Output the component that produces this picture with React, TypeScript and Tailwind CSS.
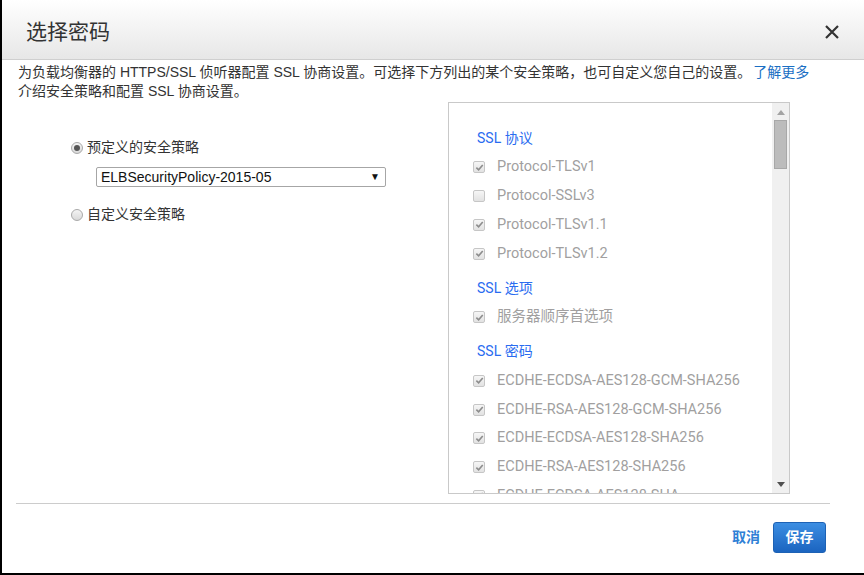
import React from "react";

const cjk = { fontFamily: '"Liberation Sans", "Noto Sans CJK SC", sans-serif' };
const roboto = { fontFamily: 'Roboto, "Noto Sans CJK SC", sans-serif' };

function Radio({ checked }: { checked?: boolean }) {
  return (
    <span className="flex h-[12px] w-[12px] items-center justify-center rounded-full border border-[#a9a9a9] bg-gradient-to-b from-[#f4f4f4] to-[#d9d9d9]">
      {checked && <span className="h-[6px] w-[6px] rounded-full bg-[#555]" />}
    </span>
  );
}

function Check({ checked }: { checked?: boolean }) {
  return (
    <span className="flex h-[12px] w-[12px] items-center justify-center rounded-[2px] border border-[#c6c6c6] bg-gradient-to-b from-[#f6f6f6] to-[#e2e2e2]">
      {checked && (
        <svg width="9" height="9" viewBox="0 0 10 10">
          <path d="M1.5 5.2 L4 7.6 L8.6 2.2" stroke="#8d8d8d" strokeWidth="1.8" fill="none" />
        </svg>
      )}
    </span>
  );
}

function Item({ label, checked = true }: { label: string; checked?: boolean }) {
  return (
    <div className="flex h-[28.8px] items-center">
      <Check checked={checked} />
      <span className="ml-[12px] text-[14.5px] text-[#a19f9f]" style={roboto}>
        {label}
      </span>
    </div>
  );
}

function Heading({ text, first }: { text: string; first?: boolean }) {
  return (
    <div
      className={`flex h-[28.8px] items-center pl-[4px] text-[14px] text-[#2a6cf0] ${first ? "" : "mt-[6px]"}`}
      style={roboto}
    >
      {text}
    </div>
  );
}

export default function App() {
  return (
    <div className="flex h-[575px] w-[864px] flex-col overflow-hidden border-b-2 border-l-2 border-black bg-white text-[#333]" style={cjk}>
      {/* header */}
      <div className="flex h-[60px] shrink-0 items-center justify-between border-b border-[#cfcfcf] bg-gradient-to-b from-white to-[#e7e7e7] pl-[24px] pr-[24px] pt-[4px]">
        <h1 className="text-[21px] font-normal text-[#333]">选择密码</h1>
        <svg width="16" height="16" viewBox="0 0 16 16">
          <path d="M2 2 L14 14 M14 2 L2 14" stroke="#333" strokeWidth="2.2" />
        </svg>
      </div>

      {/* description */}
      <p className="mt-[3px] px-[16px] text-[14px] leading-[19px] text-[#333]">
        为负载均衡器的 HTTPS/SSL 侦听器配置 SSL 协商设置。可选择下方列出的某个安全策略，也可自定义您自己的设置。
        <span className="ml-[2px] text-[#1a6fc4]">了解更多</span>
        <br />
        介绍安全策略和配置 SSL 协商设置。
      </p>

      {/* body */}
      <div className="flex pl-[14px]">
        <div className="w-[432px] pl-[55px] pt-[37px]">
          <label className="flex h-[19px] items-center gap-[4px] text-[14px]">
            <Radio checked />
            <span>预定义的安全策略</span>
          </label>
          <div className="ml-[25px] mt-[10px] flex h-[20px] w-[290px] items-center justify-between rounded-[2px] border border-[#a6a6a6] bg-white pl-[4px] pr-[5px] text-[14px] text-[#111]">
            <span className="leading-none">ELBSecurityPolicy-2015-05</span>
            <span className="text-[10px] leading-none">▼</span>
          </div>
          <label className="mt-[18px] flex h-[19px] items-center gap-[4px] text-[14px]">
            <Radio />
            <span>自定义安全策略</span>
          </label>
        </div>

        <div className="relative mt-[1px] flex h-[392px] w-[342px] overflow-hidden border border-[#c9c9c9]">
          <div className="flex-1 overflow-hidden pl-[24px] pt-[21px]">
            <Heading text="SSL 协议" first />
            <Item label="Protocol-TLSv1" />
            <Item label="Protocol-SSLv3" checked={false} />
            <Item label="Protocol-TLSv1.1" />
            <Item label="Protocol-TLSv1.2" />
            <Heading text="SSL 选项" />
            <Item label="服务器顺序首选项" />
            <Heading text="SSL 密码" />
            <Item label="ECDHE-ECDSA-AES128-GCM-SHA256" />
            <Item label="ECDHE-RSA-AES128-GCM-SHA256" />
            <Item label="ECDHE-ECDSA-AES128-SHA256" />
            <Item label="ECDHE-RSA-AES128-SHA256" />
            <Item label="ECDHE-ECDSA-AES128-SHA" />
          </div>
          {/* scrollbar */}
          <div className="flex w-[17px] shrink-0 flex-col items-center bg-[#f0f0f0]">
            <svg className="mt-[7px]" width="8" height="5" viewBox="0 0 8 5">
              <path d="M0 5 L4 0 L8 5 Z" fill="#a3a3a3" />
            </svg>
            <div className="mt-[5px] h-[49px] w-[13px] border border-[#a8a8a8] bg-[#bcbcbc]" />
            <div className="flex-1" />
            <svg className="mb-[6px]" width="8" height="5" viewBox="0 0 8 5">
              <path d="M0 0 L8 0 L4 5 Z" fill="#505050" />
            </svg>
          </div>
        </div>
      </div>

      {/* footer */}
      <div className="ml-[14px] mt-[9px] h-px w-[814px] bg-[#cccccc]" />
      <div className="flex items-center justify-end gap-[13px] pr-[38px] pt-[18px]">
        <span className="text-[14px] font-bold text-[#2f7fd6]">取消</span>
        <button className="h-[31px] w-[53px] rounded-[3px] border border-[#1d62b5] bg-gradient-to-b from-[#3c8ee2] to-[#1b64c0] text-[14px] font-bold text-white">
          保存
        </button>
      </div>
    </div>
  );
}
